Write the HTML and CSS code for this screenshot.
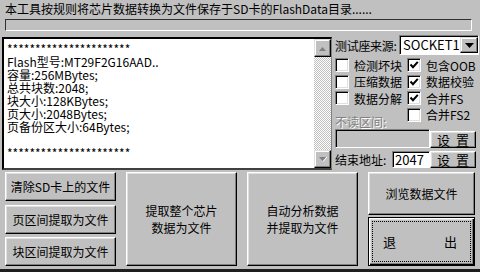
FILE: index.html
```html
<!DOCTYPE html>
<html lang="zh-CN">
<head>
    <meta charset="UTF-8">
    <meta name="viewport" content="width=device-width, initial-scale=1.0">
    <title>Flash数据提取</title>
    <link rel="stylesheet" href="styles.css">
</head>
<body>
    <div class="window">
        <div class="title">本工具按规则将芯片数据转换为文件保存于SD卡的FlashData目录......</div>
        <div class="progress"></div>

        <div class="middle">
            <!-- Log output -->
            <div class="log">
                <div class="log-text">**********************
Flash型号:MT29F2G16AAD..
容量:256MBytes;
总共块数:2048;
块大小:128KBytes;
页大小:2048Bytes;
页备份区大小:64Bytes;

**********************</div>
                <div class="scrollbar">
                    <div class="scroll-btn">
                        <svg width="9" height="5" viewBox="0 0 9 5"><path d="M1 5 L4.5 1 L8 5 Z" fill="#808080"/><path d="M2 5.5 H9" stroke="#fff"/></svg>
                    </div>
                    <div class="scroll-track"></div>
                    <div class="scroll-btn">
                        <svg width="9" height="5" viewBox="0 0 9 5"><path d="M1 0 L8 0 L4.5 4 Z" fill="#808080"/><path d="M5 4.5 L9 0" stroke="#fff"/></svg>
                    </div>
                </div>
            </div>

            <!-- Options panel -->
            <div class="options">
                <div class="source-row">
                    <span class="source-label">测试座来源:</span>
                    <div class="combo">
                        <span class="combo-value">SOCKET1</span>
                        <span class="combo-btn">
                            <svg width="9" height="5" viewBox="0 0 9 5"><path d="M0 0 H9 L4.5 5 Z" fill="#000"/></svg>
                        </span>
                    </div>
                </div>

                <div class="checks">
                    <label class="check"><span class="box"></span>检测坏块</label>
                    <label class="check"><span class="box checked"><svg width="10" height="10" viewBox="0 0 10 10"><path d="M1.5 4.5 L4 7.2 L8.8 1.8" fill="none" stroke="#000" stroke-width="2"/></svg></span>包含OOB</label>
                    <label class="check"><span class="box"></span>压缩数据</label>
                    <label class="check"><span class="box checked"><svg width="10" height="10" viewBox="0 0 10 10"><path d="M1.5 4.5 L4 7.2 L8.8 1.8" fill="none" stroke="#000" stroke-width="2"/></svg></span>数据校验</label>
                    <label class="check"><span class="box"></span>数据分解</label>
                    <label class="check"><span class="box checked"><svg width="10" height="10" viewBox="0 0 10 10"><path d="M1.5 4.5 L4 7.2 L8.8 1.8" fill="none" stroke="#000" stroke-width="2"/></svg></span>合并FS</label>
                    <span class="skip-label">不读区间:</span>
                    <label class="check"><span class="box"></span>合并FS2</label>
                </div>

                <div class="field-row">
                    <div class="field disabled"></div>
                    <button class="btn set-btn">设&nbsp;&nbsp;置</button>
                </div>
                <div class="field-row end-row">
                    <span class="end-label">结束地址:</span>
                    <div class="field end-field">2047</div>
                    <button class="btn set-btn">设&nbsp;&nbsp;置</button>
                </div>
            </div>
        </div>

        <!-- Action buttons -->
        <div class="actions">
            <div class="stack">
                <button class="btn">清除SD卡上的文件</button>
                <button class="btn">页区间提取为文件</button>
                <button class="btn">块区间提取为文件</button>
            </div>
            <button class="btn big">提取整个芯片<br>数据为文件</button>
            <button class="btn big">自动分析数据<br>并提取为文件</button>
            <div class="stack side">
                <button class="btn">浏览数据文件</button>
                <button class="btn default"><span class="focus"><span>退</span><span>出</span></span></button>
            </div>
        </div>
    </div>
</body>
</html>
```

FILE: styles.css
```css
* {
    box-sizing: border-box;
}

body {
    margin: 0;
    font-family: "Noto Sans CJK SC", "Noto Sans", sans-serif;
    font-size: 12px;
    color: #000;
    background-color: #c0c0c0;
}

/* Window */
.window {
    width: 480px;
    height: 272px;
    display: flex;
    flex-direction: column;
    background-color: #c0c0c0;
    border-bottom: 3px solid #1e1e1e;
    overflow: hidden;
}

.title {
    height: 18px;
    line-height: 18px;
    padding-left: 5px;
    white-space: nowrap;
}

.progress {
    height: 12px;
    margin: 1px 8px 0 5px;
    border: 1px solid;
    border-color: #303030 #fff #fff #303030;
}

/* Middle area */
.middle {
    display: flex;
    height: 133px;
    margin-top: 6px;
}

.log {
    display: flex;
    width: 330px;
    flex-shrink: 0;
    margin-left: 2px;
    border-style: solid;
    border-width: 2px 1px 2px 2px;
    border-color: #000 #808080 #404040 #000;
    background: #fff;
}

.log-text {
    flex: 1;
    padding: 3px 0 0 3px;
    line-height: 13px;
    white-space: pre;
    overflow: hidden;
}

.scrollbar {
    width: 17px;
    display: flex;
    flex-direction: column;
}

.scroll-btn {
    height: 18px;
    display: flex;
    align-items: center;
    justify-content: center;
    background: #c0c0c0;
    border: 1px solid;
    border-color: #dfdfdf #000 #000 #dfdfdf;
    box-shadow: inset -1px -1px #808080, inset 1px 1px #fff;
}

.scroll-track {
    flex: 1;
    background: repeating-conic-gradient(#c0c0c0 0 25%, #fff 0 50%) 0 0 / 2px 2px;
}

/* Options */
.options {
    flex: 1;
    margin-top: -2px;
    padding-left: 3px;
    white-space: nowrap;
}

.source-row {
    display: flex;
    align-items: center;
    height: 20px;
}

.source-label {
    width: 64px;
    flex-shrink: 0;
    letter-spacing: -0.3px;
}

.combo {
    width: 80px;
    height: 20px;
    flex-shrink: 0;
    display: flex;
    background: #fff;
    border: 1px solid;
    border-color: #808080 #fff #fff #808080;
    box-shadow: inset 1px 1px #000;
}

.combo-value {
    flex: 1;
    padding-left: 3px;
    font-size: 13px;
    line-height: 18px;
}

.combo-btn {
    width: 18px;
    margin: 1px 0;
    display: flex;
    align-items: center;
    justify-content: center;
    background: #c0c0c0;
    border: 1px solid;
    border-color: #dfdfdf #000 #000 #dfdfdf;
    box-shadow: inset -1px -1px #808080, inset 1px 1px #fff;
}

.checks {
    display: grid;
    grid-template-columns: 72px 1fr;
    grid-auto-rows: 16.5px;
    margin-top: 2px;
}

.check {
    display: flex;
    align-items: center;
    gap: 5px;
}

.box {
    width: 14px;
    height: 14px;
    flex-shrink: 0;
    display: flex;
    align-items: center;
    justify-content: center;
    background: #fff;
    border: 1px solid;
    border-color: #808080 #fff #fff #808080;
    box-shadow: inset 1px 1px #000, inset -1px -1px #dfdfdf;
}

.skip-label {
    align-self: end;
    margin-bottom: -6px;
    color: #808080;
    text-shadow: 1px 1px #fff;
    line-height: 14px;
}

.field-row {
    display: flex;
    align-items: flex-end;
    height: 19px;
    margin-top: 6px;
}

.end-row {
    height: 17px;
    margin-top: 3px;
    align-items: center;
}

.field {
    height: 19px;
    flex-shrink: 0;
    border: 1px solid;
    border-color: #808080 #fff #fff #808080;
    box-shadow: inset 1px 1px #000;
}

.field.disabled {
    width: 95px;
    background: #c0c0c0;
}

.end-label {
    width: 57px;
    flex-shrink: 0;
}

.end-field {
    width: 38px;
    height: 17px;
    background: #fff;
    font-size: 13px;
    line-height: 15px;
    padding-left: 2px;
}

/* Buttons */
.btn {
    font: inherit;
    color: #000;
    background-color: #c0c0c0;
    border: 1px solid;
    border-color: #fff #000 #000 #fff;
    box-shadow: inset -1px -1px #808080, inset 1px 1px #dfdfdf;
    padding: 0;
    line-height: 17px;
}

.btn.big {
    line-height: 17px;
}

.set-btn {
    width: 46px;
    height: 17px;
    flex-shrink: 0;
    font-size: 13px;
    line-height: 13px;
}

.actions {
    display: grid;
    grid-template-columns: 111px 111px 111px 107px;
    column-gap: 10px;
    height: 94px;
    margin-top: 2px;
    padding-left: 5px;
}

.stack {
    display: flex;
    flex-direction: column;
    gap: 3.5px;
}

.stack .btn {
    flex: 1;
}

.stack.side {
    gap: 2px;
}

.btn.default {
    border: 1px solid #000;
    box-shadow: inset 1px 1px #fff, inset -1px -1px #000, inset -2px -2px #808080, inset 2px 2px #dfdfdf;
    padding: 3px;
    display: flex;
}

.focus {
    flex: 1;
    display: flex;
    align-items: center;
    justify-content: space-between;
    padding: 0 13px 0 10px;
    border: 1px dotted #000;
    font-size: 13px;
}
```
